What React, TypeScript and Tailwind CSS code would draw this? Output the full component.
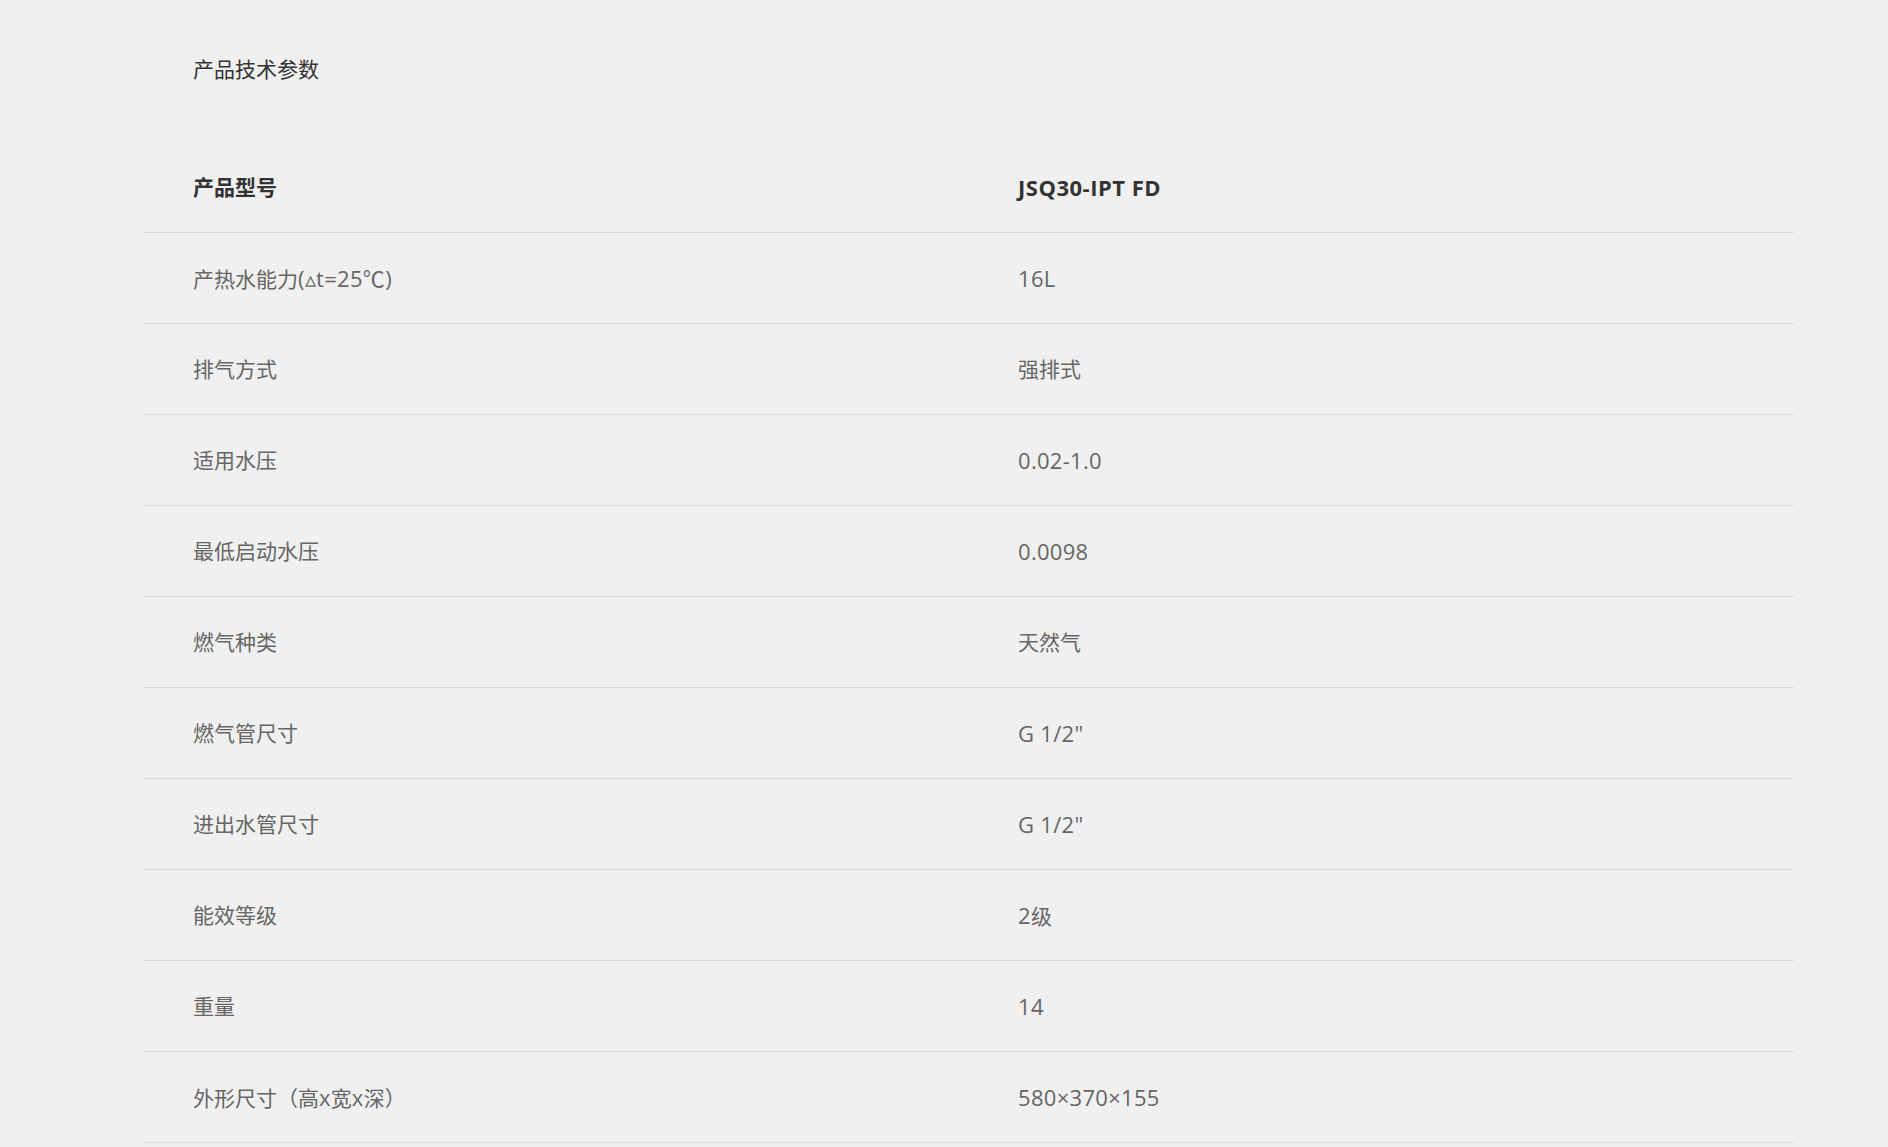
import React from "react";

const rows: [string, string][] = [
  ["产热水能力(▵t=25℃)", "16L"],
  ["排气方式", "强排式"],
  ["适用水压", "0.02-1.0"],
  ["最低启动水压", "0.0098"],
  ["燃气种类", "天然气"],
  ["燃气管尺寸", "G 1/2\""],
  ["进出水管尺寸", "G 1/2\""],
  ["能效等级", "2级"],
  ["重量", "14"],
  ["外形尺寸（高x宽x深）", "580×370×155"],
];

function Mixed({ text }: { text: string }) {
  const parts = text.match(/[\u3000-\u9fff\uff00-\uffef]+|[^\u3000-\u9fff\uff00-\uffef]+/g) || [];
  return (
    <>
      {parts.map((p, i) =>
        /[\u3000-\u9fff\uff00-\uffef]/.test(p) ? (
          <span key={i}>{p}</span>
        ) : (
          <span key={i} className="text-[22px] tracking-[0.3px]">
            {p}
          </span>
        )
      )}
    </>
  );
}

export default function App() {
  return (
    <div
      className="min-h-screen w-full bg-[#f0f0f0] text-[21px]"
      style={{ fontFamily: '"Open Sans", "Noto Sans CJK SC", sans-serif' }}
    >
      <div className="ml-[144px] w-[1650px] pt-[54px]">
        <div className="pl-[49px] leading-[30px] text-[#333]">产品技术参数</div>
        <div className="mt-[58px]">
          <div className="flex h-[91px] items-center border-b border-[#dcdcdc] pt-[2px] font-bold text-[#333]">
            <div className="w-1/2 pl-[49px]">产品型号</div>
            <div className="w-1/2 pl-[49px]">
              <span className="text-[22px] tracking-[0.5px]">JSQ30-IPT FD</span>
            </div>
          </div>
          {rows.map(([k, v], i) => (
            <div
              key={i}
              className="flex h-[91px] items-center border-b border-[#dcdcdc] pt-[2px] text-[#666]"
            >
              <div className="w-1/2 pl-[49px]">
                <Mixed text={k} />
              </div>
              <div className="w-1/2 pl-[49px]">
                <Mixed text={v} />
              </div>
            </div>
          ))}
        </div>
      </div>
    </div>
  );
}
